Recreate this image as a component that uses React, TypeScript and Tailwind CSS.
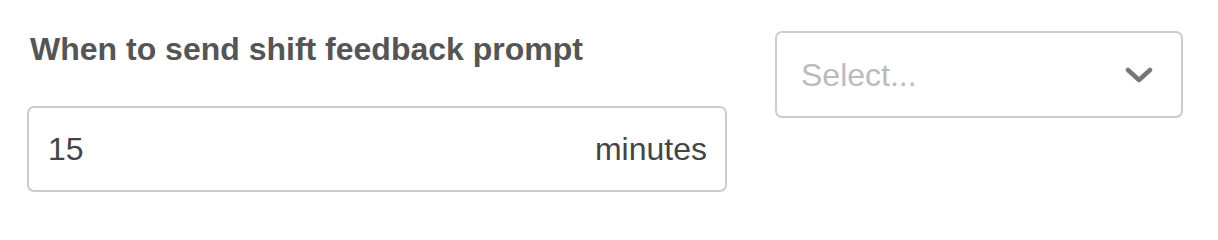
import React from "react";

export default function App() {
  return (
    <div
      className="w-[1218px] h-[240px] bg-white flex items-start gap-[48px] pl-[27px] pt-[31px]"
      style={{ fontFamily: '"Liberation Sans", Arial, sans-serif' }}
    >
      <div className="flex flex-col w-[700px]">
        <label className="text-[32px] leading-[32px] font-bold text-[#555555] mt-[2px] ml-[3px]">
          When to send shift feedback prompt
        </label>
        <div className="mt-[41px] h-[86px] border-2 border-[#cccccc] rounded-[7px] flex items-center justify-between pl-[19px] pr-[18px] text-[32px] text-[#444444]">
          <span>15</span>
          <span>minutes</span>
        </div>
      </div>
      <div className="w-[408px] h-[87px] border-2 border-[#cccccc] rounded-[7px] flex items-center justify-between pl-[24px] pr-[28px]">
        <span className="text-[32px] text-[#bbbbbb]">Select...</span>
        <svg width="28" height="18" viewBox="0 0 28 18" fill="none">
          <path d="M3 4 L14 14 L25 4" stroke="#777777" strokeWidth="4.5" strokeLinecap="round" strokeLinejoin="round" />
        </svg>
      </div>
    </div>
  );
}
